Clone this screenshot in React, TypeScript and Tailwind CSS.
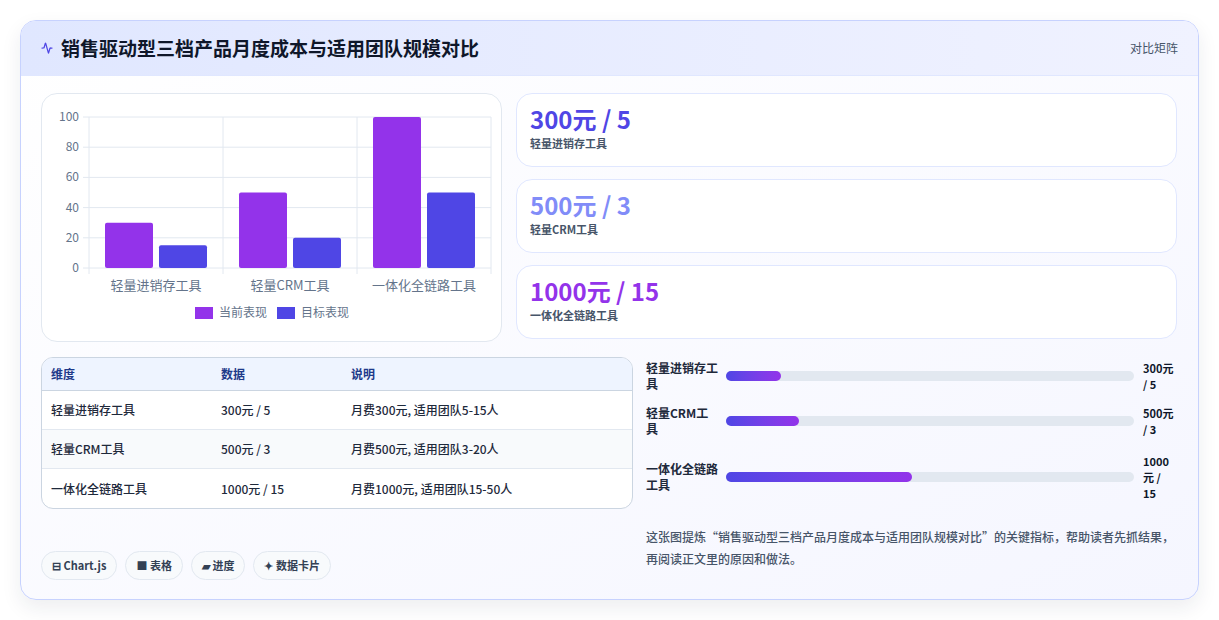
import { Activity } from "lucide-react";

const font = { fontFamily: '"Noto Sans CJK SC", "Noto Sans", sans-serif' };

const kpis = [
  { value: "300元 / 5", label: "轻量进销存工具", color: "text-[#4f46e5]" },
  { value: "500元 / 3", label: "轻量CRM工具", color: "text-[#818cf8]" },
  { value: "1000元 / 15", label: "一体化全链路工具", color: "text-[#9333ea]" },
];

const rows = [
  ["轻量进销存工具", "300元 / 5", "月费300元, 适用团队5-15人"],
  ["轻量CRM工具", "500元 / 3", "月费500元, 适用团队3-20人"],
  ["一体化全链路工具", "1000元 / 15", "月费1000元, 适用团队15-50人"],
];

const bars = [
  { name: ["轻量进销存工", "具"], value: ["300元", "/ 5"], pct: 13.5 },
  { name: ["轻量CRM工", "具"], value: ["500元", "/ 3"], pct: 18 },
  { name: ["一体化全链路", "工具"], value: ["1000", "元 /", "15"], pct: 45.5 },
];

function Chart() {
  // plot area in card coords: x 47..449, y 23 (100) .. 174 (0)
  const x0 = 47, x1 = 449, yTop = 23, yBot = 174;
  const y = (v: number) => yBot - ((yBot - yTop) * v) / 100;
  const groups = [
    { label: "轻量进销存工具", a: 30, b: 15 },
    { label: "轻量CRM工具", a: 50, b: 20 },
    { label: "一体化全链路工具", a: 100, b: 50 },
  ];
  const gw = (x1 - x0) / 3;
  return (
    <svg width="460" height="246" className="block">
      {[0, 20, 40, 60, 80, 100].map((t) => (
        <g key={t}>
          <line x1={x0 - 6} x2={x1} y1={y(t)} y2={y(t)} stroke="#e2e8f0" />
          <text x={x0 - 10} y={y(t) + 4} textAnchor="end" fontSize="12" fill="#64748b" style={font}>{t}</text>
        </g>
      ))}
      {[0, 1, 2, 3].map((i) => (
        <line key={i} x1={x0 + gw * i} x2={x0 + gw * i} y1={yTop} y2={yBot + 6} stroke="#e2e8f0" />
      ))}
      {groups.map((g, i) => {
        const gx = x0 + gw * i;
        return (
          <g key={g.label}>
            <rect x={gx + 16} y={y(g.a)} width={48} height={yBot - y(g.a)} rx="2" fill="#9333ea" />
            <rect x={gx + 70} y={y(g.b)} width={48} height={yBot - y(g.b)} rx="2" fill="#4f46e5" />
            <text x={gx + gw / 2} y={196} textAnchor="middle" fontSize="13" fill="#64748b" style={font}>{g.label}</text>
          </g>
        );
      })}
      <rect x="153" y="213" width="18" height="12" fill="#9333ea" />
      <text x="177" y="223" fontSize="12" fill="#64748b" style={font}>当前表现</text>
      <rect x="235" y="213" width="18" height="12" fill="#4f46e5" />
      <text x="259" y="223" fontSize="12" fill="#64748b" style={font}>目标表现</text>
    </svg>
  );
}

export default function App() {
  return (
    <div className="w-[1219px] h-[620px] bg-white pt-5 pl-5" style={font}>
      <div className="w-[1179px] h-[580px] rounded-2xl border border-[#c7d2fe] bg-gradient-to-br from-[#ffffff] to-[#f5f6ff] shadow-[0_8px_20px_rgba(30,41,59,0.08)] overflow-hidden">
        <div className="h-[55px] flex items-center justify-between px-5 bg-gradient-to-r from-[#e0e7ff] to-[#f0f2ff] border-b border-[#e0e7ff]">
          <div className="flex items-center gap-2">
            <Activity className="w-3 h-3 text-[#4f46e5]" strokeWidth={2.5} />
            <h1 className="text-[19px] font-bold text-[#0f172a]">销售驱动型三档产品月度成本与适用团队规模对比</h1>
          </div>
          <span className="text-xs text-[#475569]">对比矩阵</span>
        </div>
        <div className="px-5 pt-[17px] flex gap-[14px]">
          <div className="w-[461px] h-[249px] shrink-0 bg-white rounded-2xl border border-[#e2e8f0]">
            <Chart />
          </div>
          <div className="flex-1 flex flex-col gap-[12px] pr-[1px]">
            {kpis.map((k) => (
              <div key={k.label} className="h-[74px] rounded-2xl border border-[#e0e7ff] bg-white px-[13px] pt-[9px]">
                <div className={`text-[24px] font-bold leading-[32px] ${k.color}`}>{k.value}</div>
                <div className="text-[11px] font-semibold text-[#475569]">{k.label}</div>
              </div>
            ))}
          </div>
        </div>
        <div className="px-5 pt-[15px] flex gap-[13px]">
          <div className="w-[592px] shrink-0 flex flex-col">
            <div className="rounded-xl border border-[#cbd5e1] overflow-hidden bg-white">
              <div className="flex h-[33px] items-center bg-[#eef4ff] border-b border-[#cbd5e1] text-xs font-semibold text-[#1e3a8a]">
                <span className="w-[179px] pl-[9px]">维度</span>
                <span className="w-[130px]">数据</span>
                <span>说明</span>
              </div>
              {rows.map((r, i) => (
                <div key={r[0]} className={`flex h-[39px] items-center text-xs font-medium text-[#1e293b] ${i < 2 ? "border-b border-[#e2e8f0]" : ""} ${i === 1 ? "bg-[#f8fafc]" : ""}`}>
                  <span className="w-[179px] pl-[9px]">{r[0]}</span>
                  <span className="w-[130px]">{r[1]}</span>
                  <span>{r[2]}</span>
                </div>
              ))}
            </div>
            <div className="mt-[42px] flex gap-2">
              {["⊟ Chart.js", "■ 表格", "▰ 进度", "✦ 数据卡片"].map((t) => (
                <span key={t} className="h-[29px] px-[10px] flex items-center rounded-full border border-[#e2e8f0] bg-[#f8fafc] text-[11px] font-semibold text-[#334155]">{t}</span>
              ))}
            </div>
          </div>
          <div className="flex-1 flex flex-col">
            {bars.map((b, i) => (
              <div key={i} className={`flex items-center ${i === 0 ? "h-[40px] mt-[-1px]" : i === 1 ? "h-[50px]" : "h-[62px]"}`}>
                <div className="w-[80px] text-xs font-semibold text-[#1e293b] leading-[16px]">
                  {b.name.map((n) => <div key={n}>{n}</div>)}
                </div>
                <div className="flex-1 h-[10px] rounded-full bg-[#e2e8f0] mr-[9px]">
                  <div className="h-full rounded-full bg-gradient-to-r from-[#4f46e5] to-[#9333ea]" style={{ width: `${b.pct}%` }} />
                </div>
                <div className="w-[35px] text-[11px] font-bold text-[#0f172a] leading-[16px]">
                  {b.value.map((v) => <div key={v}>{v}</div>)}
                </div>
              </div>
            ))}
            <p className="mt-[18px] text-xs font-medium text-[#475569] leading-[22px]">
              这张图提炼“销售驱动型三档产品月度成本与适用团队规模对比”的关键指标，帮助读者先抓结果，再阅读正文里的原因和做法。
            </p>
          </div>
        </div>
      </div>
    </div>
  );
}
